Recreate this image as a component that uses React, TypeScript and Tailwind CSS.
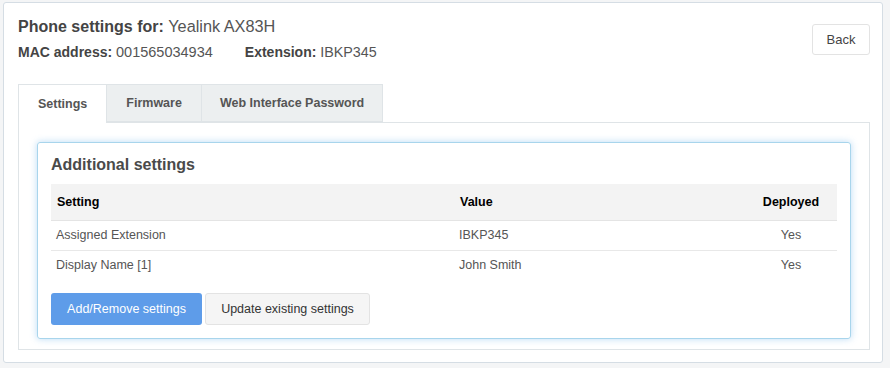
import React from "react";

export default function App() {
  const rows = [
    { s: "Assigned Extension", v: "IBKP345", d: "Yes" },
    { s: "Display Name [1]", v: "John Smith", d: "Yes" },
  ];
  return (
    <div
      className="w-[890px] h-[368px] bg-[#f4f5f6] pt-[2px] pl-[3px] pr-[7px]"
      style={{ fontFamily: '"Liberation Sans", Arial, sans-serif' }}
    >
      <div className="h-[361px] bg-white border border-[#d5dde4] rounded-[3px] pt-[13px] pl-[14px] pr-[12px]">
        <div className="flex justify-between h-[49px]">
          <div>
            <div className="text-[16px] leading-[20px] h-[20px] text-[#555]">
              <span className="font-bold text-[#444]">Phone settings for:</span>{" "}
              <span className="text-[16.3px]">Yealink AX83H</span>
            </div>
            <div className="mt-[6px] text-[14px] leading-[20px] h-[20px] text-[#555] flex">
              <span>
                <span className="font-bold text-[#444]">MAC address:</span>{" "}
                <span className="text-[14.5px]">001565034934</span>
              </span>
              <span className="ml-[32px]">
                <span className="font-bold text-[#444]">Extension:</span>{" "}
                <span className="text-[14.3px]">IBKP345</span>
              </span>
            </div>
          </div>
          <button className="mt-[8px] h-[31px] w-[58px] border border-[#e3e3e3] rounded-[3px] bg-white text-[13px] text-[#444]">
            Back
          </button>
        </div>

        <div className="mt-[19px] flex h-[39px] relative z-10">
          <div className="px-[19px] h-[39px] flex items-center border border-[#dfe4e7] border-b-0 bg-white text-[12.5px] font-bold text-[#555]">
            Settings
          </div>
          <div className="px-[19px] h-[38px] flex items-center border border-l-0 border-[#dfe4e7] bg-[#eceff0] text-[12.5px] font-bold text-[#555]">
            Firmware
          </div>
          <div className="px-[18px] h-[38px] flex items-center border border-l-0 border-[#dfe4e7] bg-[#eceff0] text-[12.5px] font-bold text-[#555]">
            Web Interface Password
          </div>
        </div>

        <div className="-mt-[1px] border border-[#dfe4e7] h-[228px] pt-[19px] px-[18px]">
          <div className="border border-[#a8d5ec] rounded-[3px] shadow-[0_0_7px_rgba(102,175,233,0.45)] h-[197px] px-[13px]">
            <div className="pt-[10px] text-[16px] leading-[24px] font-bold text-[#4a4a4a]">
              Additional settings
            </div>
            <div className="mt-[7px]">
              <div className="grid grid-cols-[403px_292px_90px] h-[37px] items-center bg-[#f3f3f3] border-b border-[#e4e4e4] text-[12.5px] font-bold text-black">
                <div className="px-[6px]">Setting</div>
                <div className="px-[6px]">Value</div>
                <div className="text-center">Deployed</div>
              </div>
              {rows.map((r, i) => (
                <div
                  key={i}
                  className={`grid grid-cols-[403px_292px_90px] items-center text-[12.5px] text-[#555] ${
                    i === 0 ? "h-[30px] border-b border-[#e8e8e8]" : "h-[29px]"
                  }`}
                >
                  <div className="px-[5px]">{r.s}</div>
                  <div className="px-[5px]">{r.v}</div>
                  <div className="text-center">{r.d}</div>
                </div>
              ))}
            </div>
            <div className="mt-[13px] flex gap-[3px]">
              <button className="h-[32px] w-[151px] rounded-[3px] bg-[#5e9ce9] text-white text-[12.5px]">
                Add/Remove settings
              </button>
              <button className="h-[32px] w-[165px] rounded-[3px] bg-[#f5f5f5] border border-[#e3e3e3] text-[#333] text-[12.5px]">
                Update existing settings
              </button>
            </div>
          </div>
        </div>
      </div>
    </div>
  );
}
